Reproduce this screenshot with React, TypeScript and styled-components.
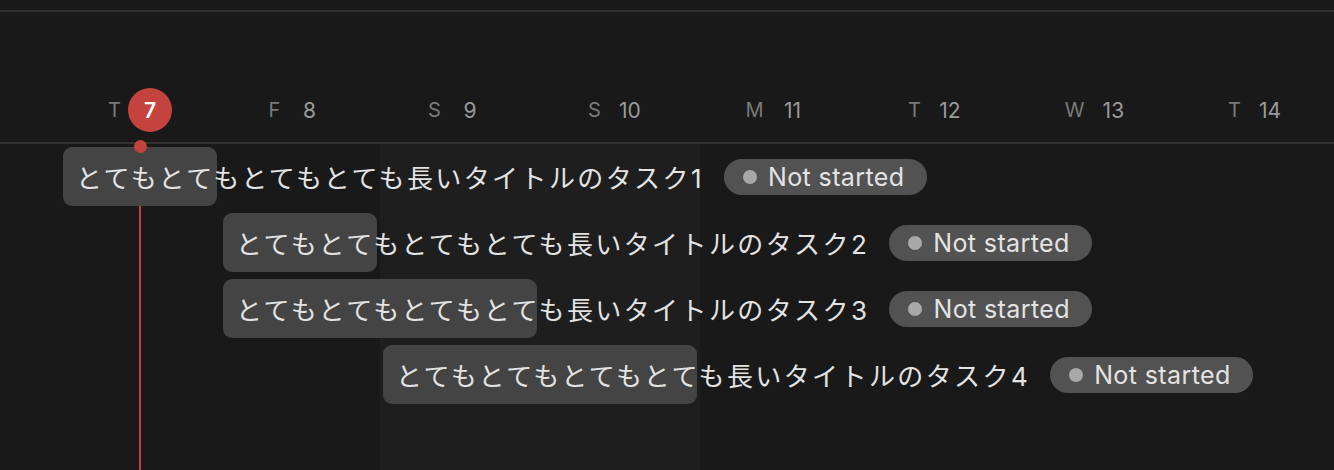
import * as React from "react";
import styled, { createGlobalStyle } from "styled-components";

const COL_WIDTH = 160;
const FIRST_COL_X = 60;

const COLORS = {
  bg: "#191919",
  weekend: "#1e1e1e",
  line: "#303030",
  bar: "#444444",
  pill: "#525252",
  dot: "#a8a8a8",
  text: "#e3e3e3",
  dayLetter: "#7a7a7a",
  dayNumber: "#9a9a9a",
  today: "#c4433e",
};

const days = [
  { letter: "T", num: 7, today: true },
  { letter: "F", num: 8 },
  { letter: "S", num: 9, weekend: true },
  { letter: "S", num: 10, weekend: true },
  { letter: "M", num: 11 },
  { letter: "T", num: 12 },
  { letter: "W", num: 13 },
  { letter: "T", num: 14 },
];

const tasks = [
  { id: 1, start: 0, span: 1 },
  { id: 2, start: 1, span: 1 },
  { id: 3, start: 1, span: 2 },
  { id: 4, start: 2, span: 2 },
];

const GlobalStyle = createGlobalStyle`
  html, body {
    margin: 0;
    padding: 0;
    background: ${COLORS.bg};
  }
  * {
    box-sizing: border-box;
  }
`;

const Page = styled.div`
  width: 1334px;
  height: 470px;
  overflow: hidden;
  background: ${COLORS.bg};
  display: flex;
  flex-direction: column;
  font-family: Inter, "Noto Sans CJK JP", sans-serif;
`;

const TopStrip = styled.div`
  height: 12px;
  flex-shrink: 0;
  border-bottom: 2px solid ${COLORS.line};
`;

const Header = styled.div`
  height: 132px;
  flex-shrink: 0;
  display: flex;
  align-items: flex-end;
  padding: 0 0 10px ${FIRST_COL_X}px;
  border-bottom: 2px solid ${COLORS.line};
`;

const DayCell = styled.div`
  width: ${COL_WIDTH}px;
  height: 44px;
  flex-shrink: 0;
  display: flex;
  align-items: center;
  justify-content: center;
  gap: 7px;
`;

const DayLetter = styled.span`
  font-size: 20px;
  color: ${COLORS.dayLetter};
`;

const DayNumber = styled.span<{ $today?: boolean }>`
  width: 44px;
  height: 44px;
  border-radius: 50%;
  display: flex;
  align-items: center;
  justify-content: center;
  font-size: 21px;
  color: ${(p) => (p.$today ? "#ffffff" : COLORS.dayNumber)};
  font-weight: ${(p) => (p.$today ? 600 : 400)};
  background: ${(p) => (p.$today ? COLORS.today : "transparent")};
`;

const Body = styled.div`
  position: relative;
  flex: 1;
  display: flex;
  flex-direction: column;
  gap: 7px;
  padding: 3px 0 0 ${FIRST_COL_X}px;
  background-image: linear-gradient(
    to right,
    transparent ${FIRST_COL_X + COL_WIDTH * 2}px,
    ${COLORS.weekend} ${FIRST_COL_X + COL_WIDTH * 2}px,
    ${COLORS.weekend} ${FIRST_COL_X + COL_WIDTH * 4}px,
    transparent ${FIRST_COL_X + COL_WIDTH * 4}px
  );
`;

const TodayLine = styled.div`
  position: absolute;
  left: ${FIRST_COL_X + COL_WIDTH / 2 - 1}px;
  top: 0;
  bottom: 0;
  width: 1.5px;
  background: ${COLORS.today};
`;

const TodayDot = styled.div`
  position: absolute;
  left: ${FIRST_COL_X + COL_WIDTH / 2 - 6.5}px;
  top: -4px;
  width: 13px;
  height: 13px;
  border-radius: 50%;
  background: ${COLORS.today};
  z-index: 2;
`;

const TaskRow = styled.div`
  position: relative;
  height: 59px;
  display: flex;
  align-items: stretch;
`;

const Bar = styled.div`
  flex-shrink: 0;
  border-radius: 9px;
  background: ${COLORS.bar};
  display: flex;
  align-items: center;
  padding-left: 13px;
  white-space: nowrap;
`;

const BarContent = styled.div`
  display: flex;
  align-items: center;
  gap: 20px;
  flex-shrink: 0;
`;

const Title = styled.span`
  font-family: Inter, "Noto Sans CJK JP", sans-serif;
  font-size: 26px;
  color: ${COLORS.text};
  letter-spacing: 2.4px;
`;

const StatusPill = styled.span`
  height: 36px;
  border-radius: 18px;
  background: ${COLORS.pill};
  display: flex;
  align-items: center;
  gap: 11px;
  padding: 0 22px 0 19px;
  font-size: 25px;
  letter-spacing: 0.4px;
  color: ${COLORS.text};
`;

const StatusDot = styled.span`
  width: 14px;
  height: 14px;
  border-radius: 50%;
  background: ${COLORS.dot};
`;

export default function App() {
  return (
    <Page>
      <GlobalStyle />
      <TopStrip />
      <Header>
        {days.map((d) => (
          <DayCell key={d.num}>
            <DayLetter>{d.letter}</DayLetter>
            <DayNumber $today={d.today}>{d.num}</DayNumber>
          </DayCell>
        ))}
      </Header>
      <Body>
        <TodayLine />
        <TodayDot />
        {tasks.map((t) => (
          <TaskRow key={t.id} style={{ paddingLeft: t.start * COL_WIDTH + 3 }}>
            <Bar style={{ width: t.span * COL_WIDTH - 6 }}>
              <BarContent>
                <Title>とてもとてもとてもとても長いタイトルのタスク{t.id}</Title>
                <StatusPill>
                  <StatusDot />
                  Not started
                </StatusPill>
              </BarContent>
            </Bar>
          </TaskRow>
        ))}
      </Body>
    </Page>
  );
}
